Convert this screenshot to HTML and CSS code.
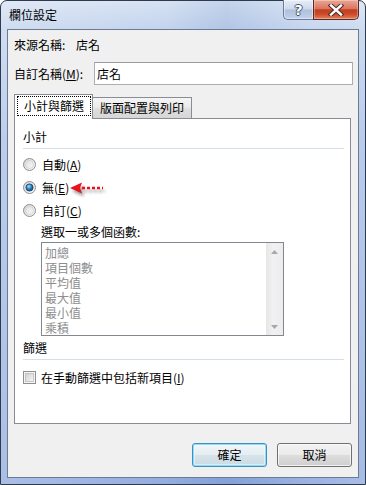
FILE: index.html
```html
<!DOCTYPE html>
<html lang="zh-Hant">
<head>
<meta charset="utf-8">
<title>欄位設定</title>
<link rel="stylesheet" href="styles.css">
</head>
<body>
<div class="window">
  <div class="titlebar">
    <span class="title">欄位設定</span>
    <div class="caption-buttons">
      <div class="cbtn help"><span class="qmark">?</span></div>
      <div class="cbtn close">
        <svg width="16" height="12" viewBox="0 0 16 12">
          <path d="M3 1.5 L13 10.5 M13 1.5 L3 10.5" stroke="#4a2a25" stroke-width="4.4" stroke-linecap="square" fill="none"/>
          <path d="M3 1.5 L13 10.5 M13 1.5 L3 10.5" stroke="#ffffff" stroke-width="2.4" stroke-linecap="square" fill="none"/>
        </svg>
      </div>
    </div>
  </div>
  <div class="client">
    <div class="row source-row">
      <span class="src-label">來源名稱:</span><span>店名</span>
    </div>
    <div class="row custom-row">
      <span class="custom-label">自訂名稱(<u>M</u>):</span>
      <div class="textbox">店名</div>
    </div>
    <div class="tabs">
      <div class="tab active"><span class="focus">小計與篩選</span></div>
      <div class="tab inactive">版面配置與列印</div>
    </div>
    <div class="panel">
      <div class="group-label">小計</div>
      <div class="sep"></div>
      <div class="radio-row">
        <svg class="radio" width="13" height="13" viewBox="0 0 13 13">
          <defs>
            <linearGradient id="rg1" x1="0" y1="0" x2="1" y2="1">
              <stop offset="0" stop-color="#d2d2d2"/><stop offset="1" stop-color="#fbfbfb"/>
            </linearGradient>
            <linearGradient id="rgi1" x1="0" y1="0" x2="1" y2="1">
              <stop offset="0" stop-color="#e2e2e2"/><stop offset="1" stop-color="#f6f6f6"/>
            </linearGradient>
          </defs>
          <circle cx="6.5" cy="6.5" r="6" fill="url(#rg1)" stroke="#8e8f8f"/>
          <circle cx="6.5" cy="6.5" r="4" fill="url(#rgi1)" stroke="#c9c9c9" stroke-width="0.6"/>
        </svg>
        <span>自動(<u>A</u>)</span>
      </div>
      <div class="radio-row">
        <svg class="radio" width="13" height="13" viewBox="0 0 13 13">
          <defs>
            <linearGradient id="rg2" x1="0" y1="0" x2="1" y2="1">
              <stop offset="0" stop-color="#d2d2d2"/><stop offset="1" stop-color="#fbfbfb"/>
            </linearGradient>
            <radialGradient id="dot" cx="0.4" cy="0.35" r="0.7">
              <stop offset="0" stop-color="#a6e3fb"/><stop offset="0.45" stop-color="#2f8ccf"/><stop offset="1" stop-color="#0f3d6b"/>
            </radialGradient>
          </defs>
          <circle cx="6.5" cy="6.5" r="6" fill="url(#rg2)" stroke="#8e8f8f"/>
          <circle cx="6.5" cy="6.5" r="3.6" fill="url(#dot)" stroke="#1d3d63" stroke-width="0.8"/>
        </svg>
        <span>無(<u>E</u>)</span>
        <svg class="arrow" width="36" height="14" viewBox="0 0 36 14">
          <polygon points="0,7 12,1.5 10,7 12,12.5" fill="#e8121c"/>
          <line x1="12" y1="7" x2="33" y2="7" stroke="#e8121c" stroke-width="2.6" stroke-dasharray="3 2"/>
        </svg>
      </div>
      <div class="radio-row">
        <svg class="radio" width="13" height="13" viewBox="0 0 13 13">
          <defs>
            <linearGradient id="rg3" x1="0" y1="0" x2="1" y2="1">
              <stop offset="0" stop-color="#d2d2d2"/><stop offset="1" stop-color="#fbfbfb"/>
            </linearGradient>
            <linearGradient id="rgi3" x1="0" y1="0" x2="1" y2="1">
              <stop offset="0" stop-color="#e2e2e2"/><stop offset="1" stop-color="#f6f6f6"/>
            </linearGradient>
          </defs>
          <circle cx="6.5" cy="6.5" r="6" fill="url(#rg3)" stroke="#8e8f8f"/>
          <circle cx="6.5" cy="6.5" r="4" fill="url(#rgi3)" stroke="#c9c9c9" stroke-width="0.6"/>
        </svg>
        <span>自訂(<u>C</u>)</span>
      </div>
      <div class="sub-label">選取一或多個函數:</div>
      <div class="listbox">
        <div class="items">
          <div>加總</div>
          <div>項目個數</div>
          <div>平均值</div>
          <div>最大值</div>
          <div>最小值</div>
          <div>乘積</div>
        </div>
        <div class="scrollbar">
          <div class="sb-btn"><svg width="7" height="4" viewBox="0 0 7 4"><polygon points="0,4 3.5,0 7,4" fill="#a7a7a7"/></svg></div>
          <div class="sb-btn"><svg width="7" height="4" viewBox="0 0 7 4"><polygon points="0,0 3.5,4 7,0" fill="#a7a7a7"/></svg></div>
        </div>
      </div>
      <div class="group-label filter-label">篩選</div>
      <div class="sep"></div>
      <div class="check-row">
        <svg class="checkbox" width="13" height="13" viewBox="0 0 13 13">
          <defs>
            <linearGradient id="cg" x1="0" y1="0" x2="1" y2="1">
              <stop offset="0" stop-color="#cfcfcf"/><stop offset="1" stop-color="#f7f7f7"/>
            </linearGradient>
          </defs>
          <rect x="0.5" y="0.5" width="12" height="12" fill="#f4f4f4" stroke="#8f8f8f"/>
          <rect x="2.5" y="2.5" width="8" height="8" fill="url(#cg)" stroke="#bdbdbd" stroke-width="0.8"/>
        </svg>
        <span>在手動篩選中包括新項目(<u>I</u>)</span>
      </div>
    </div>
    <div class="buttons">
      <div class="btn default">確定</div>
      <div class="btn">取消</div>
    </div>
  </div>
</div>
</body>
</html>
```

FILE: styles.css
```css
* { box-sizing: border-box; }
html, body { margin: 0; padding: 0; }
body {
  width: 366px;
  height: 485px;
  overflow: hidden;
  background: #ffffff;
  font-family: "Noto Sans CJK TC", "Noto Sans", sans-serif;
  font-size: 12px;
  color: #000;
}
u { text-decoration: underline; text-underline-offset: 1px; }

.window {
  width: 366px;
  height: 485px;
  border: 1px solid #2d3a4f;
  border-radius: 7px 7px 0 0;
  padding: 0 6px 6px;
  display: flex;
  flex-direction: column;
  background:
    linear-gradient(90deg, rgba(255,255,255,0.28) 0%, rgba(255,255,255,0.08) 45%, rgba(90,120,180,0.12) 62%, rgba(255,255,255,0.15) 85%, rgba(255,255,255,0.25) 100%),
    linear-gradient(180deg, #d3e0f2 0px, #bed0ec 28px, #a3bbe4 140px, #8aa6dc 485px);
}

.titlebar {
  height: 28px;
  display: flex;
  align-items: flex-start;
}
.title {
  margin-left: 2px;
  padding-top: 6px;
  line-height: 16px;
  font-size: 12px;
  color: #000;
}
.caption-buttons {
  margin-left: auto;
  margin-top: -1px;
  display: flex;
}
.cbtn {
  height: 20px;
  display: flex;
  align-items: center;
  justify-content: center;
}
.help {
  width: 30px;
  border: 1px solid #6a7a97;
  border-top: none;
  border-right: none;
  border-radius: 0 0 0 5px;
  background: linear-gradient(180deg, #e6edf7 0%, #cdd9ec 48%, #aebfdc 52%, #c3d2ea 100%);
  box-shadow: inset 0 0 0 1px rgba(255,255,255,0.45);
}
.qmark {
  font-family: "DejaVu Sans", sans-serif;
  font-weight: bold;
  font-size: 14px;
  line-height: 14px;
  color: #fff;
  text-shadow: -1px 0 #45556d, 1px 0 #45556d, 0 -1px #45556d, 0 1px #45556d;
}
.close {
  width: 46px;
  border: 1px solid #5d2a22;
  border-top: none;
  border-radius: 0 0 5px 0;
  background: linear-gradient(180deg, #eaa896 0%, #d9765f 45%, #c43d1f 52%, #cc4a2b 75%, #e2835f 100%);
  box-shadow: inset 0 0 0 1px rgba(255,255,255,0.3);
}

.client {
  flex: 1;
  border: 1px solid #6b7b93;
  background: #f0f0f0;
  display: flex;
  flex-direction: column;
  padding-top: 7px;
}

.row {
  display: flex;
  align-items: center;
  padding-left: 6px;
}
.source-row { height: 16px; line-height: 16px; }
.src-label { width: 62px; }
.custom-row {
  margin-top: 9px;
  height: 23px;
}
.custom-label { width: 80px; }
.textbox {
  width: 259px;
  height: 23px;
  border: 1px solid #abadb3;
  border-top-color: #9a9ca3;
  background: #fff;
  padding-left: 2px;
  line-height: 21px;
}

.tabs {
  margin-top: 9px;
  margin-left: 6px;
  height: 24px;
  display: flex;
  align-items: flex-end;
}
.tab {
  border: 1px solid #898c95;
  border-bottom: none;
}
.tab.active {
  width: 79px;
  height: 25px;
  margin-bottom: -1px;
  background: #fff;
  position: relative;
  z-index: 1;
}
.focus {
  display: block;
  margin: 1px 1px 0 2px;
  height: 20px;
  border: 1px dotted #000;
  text-align: center;
  line-height: 18px;
}
.tab.inactive {
  width: 99px;
  height: 21px;
  border-left: none;
  background: linear-gradient(180deg, #f5f5f5 0%, #ebebeb 45%, #dedede 55%, #d6d6d6 100%);
  text-align: center;
  line-height: 20px;
}

.panel {
  margin-left: 6px;
  width: 337px;
  height: 306px;
  border: 1px solid #898c95;
  background: #fff;
  padding: 10px 6px 0 8px;
  display: flex;
  flex-direction: column;
}
.group-label {
  height: 16px;
  line-height: 16px;
}
.sep {
  margin-top: 3px;
  height: 1px;
  background: #d5dfe8;
}
.radio-row {
  height: 23px;
  display: flex;
  align-items: center;
}
.sep + .radio-row { margin-top: 4px; }
.radio { margin-right: 6px; flex: none; }
.arrow {
  margin-left: 1px;
  margin-top: 1px;
  filter: drop-shadow(2px 3px 1.5px rgba(0,0,0,0.4));
}
.sub-label {
  margin-top: 2px;
  margin-left: 18px;
  height: 16px;
  line-height: 16px;
}
.listbox {
  margin-top: 2px;
  margin-left: 18px;
  width: 243px;
  height: 94px;
  border: 1px solid #828790;
  background: #fff;
  display: flex;
}
.items {
  flex: 1;
  padding: 2px 0 0 3px;
  color: #8d8d8d;
  line-height: 15px;
}
.scrollbar {
  width: 17px;
  background: linear-gradient(90deg, #e6e6e6, #f1f1f1 40%, #ececec);
  display: flex;
  flex-direction: column;
  justify-content: space-between;
}
.sb-btn {
  height: 17px;
  display: flex;
  align-items: center;
  justify-content: center;
}
.filter-label { margin-top: 4px; }
.check-row {
  margin-top: 9px;
  height: 16px;
  display: flex;
  align-items: center;
}
.checkbox { margin-right: 5px; flex: none; }

.buttons {
  margin-top: 19px;
  padding-right: 6px;
  display: flex;
  justify-content: flex-end;
  gap: 10px;
}
.btn {
  width: 75px;
  height: 24px;
  border: 1px solid #707070;
  border-radius: 3px;
  background: linear-gradient(180deg, #f2f2f2 0%, #ebebeb 48%, #dddddd 52%, #cfcfcf 100%);
  box-shadow: inset 0 0 0 1px rgba(255,255,255,0.7);
  text-align: center;
  line-height: 22px;
}
.btn.default {
  border-color: #3c8fc8;
  box-shadow: inset 0 0 0 1px #8fdcf7, inset 0 0 0 2px rgba(255,255,255,0.4);
  background: linear-gradient(180deg, #f0f5f8 0%, #e6eef3 48%, #d6e3ea 52%, #cbdbe3 100%);
}
```
